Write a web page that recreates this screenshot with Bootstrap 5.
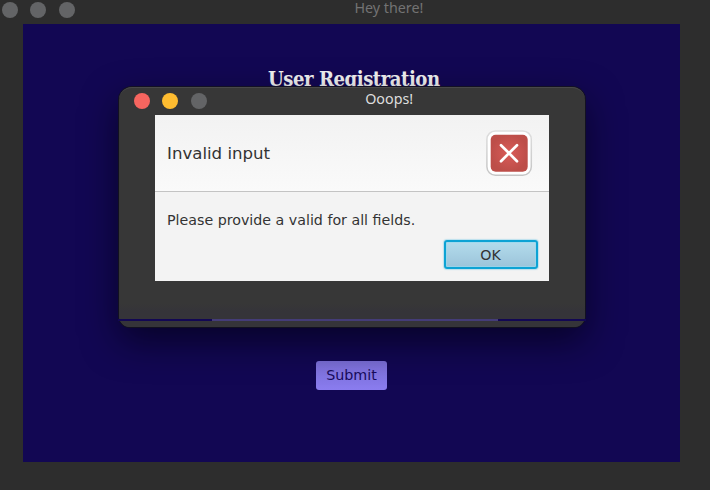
<!DOCTYPE html>
<html lang="en">
<head>
<meta charset="utf-8">
<meta name="viewport" content="width=device-width, initial-scale=1">
<title>Hey there!</title>
<link href="https://cdn.jsdelivr.net/npm/bootstrap@5.3.0/dist/css/bootstrap.min.css" rel="stylesheet">
<style>
body { background: #2d2d2d; font-family: "DejaVu Sans", sans-serif; height: 490px; }
.app-window { width: 710px; height: 490px; }
.window-bar { height: 24px; font: 14.3px/15px "Noto Sans", sans-serif; color: #737373; }
.lights { gap: 12.5px; }
.light { width: 16px; height: 16px; border-radius: 50%; background: #636466; }
.light-close { background: #f6655f; }
.light-min { background: #febc30; }
.window-bar .lights { padding: 2px 0 0 1.7px; }
.app-title { width: 70px; margin: 0 0 0 279.7px; }
.app-body { width: 657px; height: 438px; margin-left: 23px; background: #120753; }
.form-title { font: bold 20.1px/20px "DejaVu Serif Condensed", "DejaVu Serif", serif; font-stretch: condensed; letter-spacing: -.46px; color: #f2f2f2; margin: 45px 0 0 245px; white-space: nowrap; }
.submit-btn { width: 71px; height: 29px; margin: 272px 0 0 293px; padding: 0; border: 0; border-radius: 3px; font-size: 14.3px; line-height: 29px; color: #180b5c; background: linear-gradient(#7a6ed6, #8a7cef); }
.alert-window { left: 119px; top: 87px; width: 466px; height: 240px; background: #373737; border-radius: 13px 13px 11px 11px; box-shadow: 0 0 0 1px rgba(20,20,28,.85), 0 14px 36px 0 rgba(0,0,12,.6); }
.alert-bar { height: 28px; font: 14.3px/17px "Noto Sans", sans-serif; color: #dedede; border-top: 1px solid #484848; border-radius: 13px 13px 0 0; }
.alert-bar .lights { padding: 5px 0 0 14.7px; }
.alert-name { margin: 2px 0 0 158.5px; }
.alert-pane { width: 394px; height: 166px; margin-left: 36px; background: #f3f3f3; color: #333; }
.alert-head { height: 77px; padding: 0 16px 0 12px; font-size: 16.6px; background: linear-gradient(#f2f2f2, #fafafa); border-bottom: 1px solid #c3c3c3; }
.alert-head span { padding-top: 2px; }
.alert-text { font-size: 14.22px; line-height: 20px; padding: 18px 12px 0; }
.ok-btn { width: 94px; height: 29px; margin: 10px 0 0 288.5px; padding: 0; border: 2px solid #0da3d4; border-radius: 3px; font-size: 14.2px; line-height: 26px; color: #333; background: linear-gradient(#b3dcec, #9cc4da); box-shadow: 0 0 1px 1px rgba(80,190,225,.35), inset 0 0 0 1px rgba(150,217,239,.65); }
.edge-glow { height: 23px; margin-top: 23px; background: linear-gradient(#373737, #353439 30%, #353439); border-radius: 0 0 11px 11px; }
.bottom-line { height: 2px; bottom: 6px; left: -1px; right: -1px; background: linear-gradient(90deg, #120753 94px, #443c78 94px, #443c78 380px, #120753 380px); }
</style>
<script src="https://cdn.jsdelivr.net/npm/bootstrap@5.3.0/dist/js/bootstrap.bundle.min.js"></script>
</head>
<body class="m-0 overflow-hidden">
<div class="app-window position-relative overflow-hidden">
  <header class="window-bar d-flex align-items-start">
    <div class="lights d-flex"><span class="light"></span><span class="light"></span><span class="light"></span></div>
    <div class="app-title text-nowrap">Hey there!</div>
  </header>
  <main class="app-body d-flex flex-column align-items-start">
    <h1 class="form-title mb-0">User Registration</h1>
    <button type="button" class="submit-btn btn">Submit</button>
  </main>
  <section class="alert-window position-absolute d-flex flex-column" role="alertdialog">
    <header class="alert-bar d-flex align-items-start">
      <div class="lights d-flex"><span class="light light-close"></span><span class="light light-min"></span><span class="light"></span></div>
      <div class="alert-name text-nowrap">Ooops!</div>
    </header>
    <div class="alert-pane">
      <div class="alert-head d-flex align-items-center justify-content-between">
        <span>Invalid input</span>
        <svg width="48" height="48" viewBox="0 0 48 48" aria-hidden="true">
          <defs>
            <radialGradient id="red"><stop stop-color="#d95b58"/><stop offset="1" stop-color="#bd4e49"/></radialGradient>
            <linearGradient id="rim" x2="0" y2="1"><stop stop-color="#dedede"/><stop offset="1" stop-color="#c5c5c5"/></linearGradient>
          </defs>
          <rect x="1.9" y="1.9" width="44.4" height="44.4" rx="8.5" fill="#fff" stroke="url(#rim)" stroke-width="1.5"/>
          <rect x="5.7" y="5.7" width="37" height="37" rx="5" fill="url(#red)"/>
          <path d="M16 16.2 32 32.2M32 16.2 16 32.2" stroke="#fff" stroke-width="2.7" stroke-linecap="round"/>
        </svg>
      </div>
      <div class="alert-text">Please provide a valid for all fields.</div>
      <button type="button" class="ok-btn btn d-block">OK</button>
    </div>
    <div class="edge-glow"></div>
    <div class="bottom-line position-absolute"></div>
  </section>
</div>
</body>
</html>
